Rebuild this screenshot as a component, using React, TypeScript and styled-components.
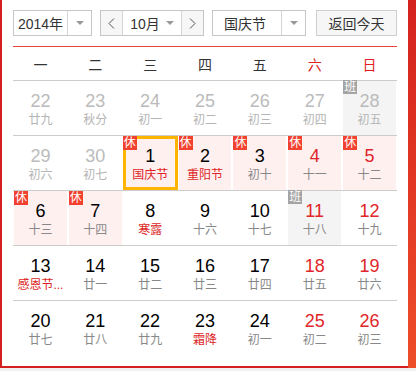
import React from "react";
import styled, { createGlobalStyle } from "styled-components";

const GlobalStyle = createGlobalStyle`
  body {
    margin: 0;
    background: #f0f0f0;
    font-family: "Liberation Sans", "Noto Sans CJK SC", sans-serif;
  }
`;

const Page = styled.div`
  display: flex;
  height: 368px;
`;

const Panel = styled.section`
  width: 408px;
  box-sizing: border-box;
  background: #fff;
  border-left: 2px solid #d2201e;
  border-bottom: 2px solid #d2201e;
  padding: 10px 11px 0 11px;
  overflow: hidden;
`;

const SideBand = styled.div`
  width: 8px;
  background: linear-gradient(#d4221e, #ee4d2a);
`;

const Toolbar = styled.div`
  display: flex;
  height: 26px;
  padding-bottom: 10px;
  border-bottom: 1px solid #e8433a;
`;

const Select = styled.div<{ $w: number; $gap: number }>`
  display: flex;
  width: ${(p) => p.$w}px;
  margin-right: ${(p) => p.$gap}px;
  box-sizing: border-box;
  border: 1px solid #c6c6c6;
  background: #fff;
  font-size: 14px;
  color: #333;
`;

const SelectText = styled.div<{ $center?: boolean }>`
  flex: 1;
  display: flex;
  align-items: center;
  justify-content: ${(p) => (p.$center ? "center" : "flex-start")};
  padding-left: ${(p) => (p.$center ? 0 : 11)}px;
`;

const ArrowBox = styled.div`
  width: 23px;
  display: flex;
  align-items: center;
  justify-content: center;
  border-left: 1px solid #d6d6d6;
`;

const Caret = styled.span<{ $inline?: boolean }>`
  width: 0;
  height: 0;
  border-left: 4px solid transparent;
  border-right: 4px solid transparent;
  border-top: 4px solid #999;
  margin-left: ${(p) => (p.$inline ? 6 : 0)}px;
`;

const NavButton = styled.div<{ $side: "left" | "right" }>`
  width: 21px;
  display: flex;
  align-items: center;
  justify-content: center;
  background: #f6f6f6;
  ${(p) => (p.$side === "left" ? "border-right" : "border-left")}: 1px solid #d6d6d6;
`;

const TodayButton = styled.div`
  width: 81px;
  box-sizing: border-box;
  border: 1px solid #cfcfcf;
  background: #f6f6f6;
  display: flex;
  align-items: center;
  justify-content: center;
  font-size: 14px;
  color: #333;
`;

const WeekHead = styled.div`
  display: grid;
  grid-template-columns: repeat(7, 1fr);
  height: 33px;
  align-items: center;
  text-align: center;
  font-size: 14px;
`;

const WeekName = styled.div<{ $red: boolean }>`
  color: ${(p) => (p.$red ? "#e02020" : "#333")};
`;

const Row = styled.div`
  display: grid;
  grid-template-columns: repeat(7, 1fr);
  height: 55px;
  box-sizing: border-box;
  border-top: 1px solid #cccccc;
`;

type Tone = "plain" | "rest" | "work";

const Cell = styled.div<{ $tone: Tone; $selected: boolean }>`
  position: relative;
  margin: ${(p) => (p.$selected ? "0" : "0 1px")};
  box-sizing: border-box;
  text-align: center;
  padding-top: ${(p) => (p.$selected ? 7 : 10)}px;
  background: ${(p) =>
    p.$tone === "rest" ? "#fff0f0" : p.$tone === "work" ? "#f4f4f4" : "#fff"};
  border: ${(p) => (p.$selected ? "3px solid #ffb400" : "none")};
`;

const DayNum = styled.div<{ $color: string }>`
  font-size: 18px;
  line-height: 20px;
  color: ${(p) => p.$color};
`;

const Lunar = styled.div<{ $color: string }>`
  font-size: 12px;
  line-height: 16px;
  margin-top: 1px;
  color: ${(p) => p.$color};
  white-space: nowrap;
`;

const Badge = styled.span<{ $work: boolean; $selected: boolean }>`
  position: absolute;
  top: ${(p) => (p.$selected ? -3 : p.$work ? -1 : 0)}px;
  left: ${(p) => (p.$selected ? -3 : 0)}px;
  width: 14px;
  height: 14px;
  line-height: 14px;
  font-size: 12px;
  color: #fff;
  text-align: center;
  background: ${(p) => (p.$work ? "#a4a4a4" : "#f2412f")};
`;

type Day = {
  n: number;
  lunar: string;
  other?: boolean;
  red?: boolean;
  fest?: boolean;
  tag?: "休" | "班";
  sel?: boolean;
};

const weeks: Day[][] = [
  [
    { n: 22, lunar: "廿九", other: true },
    { n: 23, lunar: "秋分", other: true },
    { n: 24, lunar: "初一", other: true },
    { n: 25, lunar: "初二", other: true },
    { n: 26, lunar: "初三", other: true },
    { n: 27, lunar: "初四", other: true },
    { n: 28, lunar: "初五", other: true, tag: "班" },
  ],
  [
    { n: 29, lunar: "初六", other: true },
    { n: 30, lunar: "初七", other: true },
    { n: 1, lunar: "国庆节", fest: true, tag: "休", sel: true },
    { n: 2, lunar: "重阳节", fest: true, tag: "休" },
    { n: 3, lunar: "初十", tag: "休" },
    { n: 4, lunar: "十一", red: true, tag: "休" },
    { n: 5, lunar: "十二", red: true, tag: "休" },
  ],
  [
    { n: 6, lunar: "十三", tag: "休" },
    { n: 7, lunar: "十四", tag: "休" },
    { n: 8, lunar: "寒露", fest: true },
    { n: 9, lunar: "十六" },
    { n: 10, lunar: "十七" },
    { n: 11, lunar: "十八", red: true, tag: "班" },
    { n: 12, lunar: "十九", red: true },
  ],
  [
    { n: 13, lunar: "感恩节...", fest: true },
    { n: 14, lunar: "廿一" },
    { n: 15, lunar: "廿二" },
    { n: 16, lunar: "廿三" },
    { n: 17, lunar: "廿四" },
    { n: 18, lunar: "廿五", red: true },
    { n: 19, lunar: "廿六", red: true },
  ],
  [
    { n: 20, lunar: "廿七" },
    { n: 21, lunar: "廿八" },
    { n: 22, lunar: "廿九" },
    { n: 23, lunar: "霜降", fest: true },
    { n: 24, lunar: "初一" },
    { n: 25, lunar: "初二", red: true },
    { n: 26, lunar: "初三", red: true },
  ],
];

const weekNames = ["一", "二", "三", "四", "五", "六", "日"];

function Chevron({ dir }: { dir: "left" | "right" }) {
  return (
    <svg width="7" height="11" viewBox="0 0 7 11">
      <path
        d={dir === "left" ? "M6 0.5 L1 5.5 L6 10.5" : "M1 0.5 L6 5.5 L1 10.5"}
        fill="none"
        stroke="#555"
        strokeWidth="1"
      />
    </svg>
  );
}

function DayCell({ d }: { d: Day }) {
  const tone: Tone = d.tag === "休" ? "rest" : d.tag === "班" ? "work" : "plain";
  const numColor = d.other ? "#bbb" : d.red ? "#e0262a" : "#000";
  const lunarColor = d.other ? "#b4b4b4" : d.fest ? "#dd1f26" : "#888";
  return (
    <Cell $tone={tone} $selected={!!d.sel}>
      {d.tag && (
        <Badge $work={d.tag === "班"} $selected={!!d.sel}>
          {d.tag}
        </Badge>
      )}
      <DayNum $color={numColor}>{d.n}</DayNum>
      <Lunar $color={lunarColor}>{d.lunar}</Lunar>
    </Cell>
  );
}

export default function App() {
  return (
    <>
      <GlobalStyle />
      <Page>
        <Panel>
          <Toolbar>
            <Select $w={79} $gap={8}>
              <SelectText $center>2014年</SelectText>
              <ArrowBox>
                <Caret />
              </ArrowBox>
            </Select>
            <Select $w={104} $gap={8}>
              <NavButton $side="left">
                <Chevron dir="left" />
              </NavButton>
              <SelectText $center>
                10月
                <Caret $inline />
              </SelectText>
              <NavButton $side="right">
                <Chevron dir="right" />
              </NavButton>
            </Select>
            <Select $w={94} $gap={10}>
              <SelectText>国庆节</SelectText>
              <ArrowBox>
                <Caret />
              </ArrowBox>
            </Select>
            <TodayButton>返回今天</TodayButton>
          </Toolbar>
          <WeekHead>
            {weekNames.map((w, i) => (
              <WeekName key={w} $red={i >= 5}>
                {w}
              </WeekName>
            ))}
          </WeekHead>
          {weeks.map((week, i) => (
            <Row key={i}>
              {week.map((d) => (
                <DayCell key={`${i}-${d.n}`} d={d} />
              ))}
            </Row>
          ))}
        </Panel>
        <SideBand />
      </Page>
    </>
  );
}
